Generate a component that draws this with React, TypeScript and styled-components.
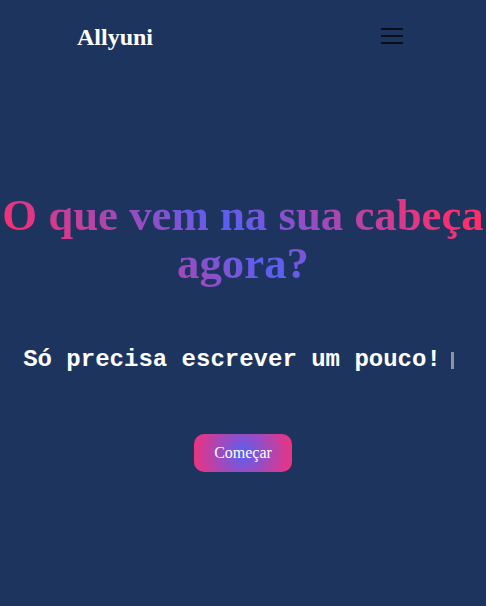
import React from "react";
import styled, { createGlobalStyle } from "styled-components";

const Global = createGlobalStyle`
  html, body { margin: 0; padding: 0; }
  body {
    background: #1d355e;
    font-family: "Liberation Serif", "Times New Roman", serif;
    color: #fff;
  }
`;

const Page = styled.div`
  min-height: 606px;
  display: flex;
  flex-direction: column;
`;

const Nav = styled.nav`
  height: 74px;
  display: flex;
  align-items: center;
  justify-content: space-between;
  padding: 0 83px 0 77px;
`;

const Logo = styled.div`
  font-size: 24px;
  font-weight: 700;
  color: #fff;
`;

const Burger = styled.button`
  width: 22px;
  display: flex;
  flex-direction: column;
  gap: 5px;
  padding: 0;
  margin-bottom: 3px;
  background: none;
  border: none;
`;

const Bar = styled.span`
  display: block;
  height: 2px;
  width: 22px;
  background: #0b0f1a;
`;

const Hero = styled.main`
  display: flex;
  flex-direction: column;
  align-items: center;
  text-align: center;
`;

const Title = styled.h1`
  margin: 117px 0 0;
  width: 100%;
  font-size: 44.8px;
  line-height: 48px;
  font-weight: 700;
  background: linear-gradient(45deg, #ff2d6b 10%, #5a5ff2 50%, #ff2d6b 90%);
  -webkit-background-clip: text;
  background-clip: text;
  color: transparent;
`;

const Sub = styled.p`
  margin: 59px 0 0;
  padding-right: 9px;
  font-family: "Liberation Mono", "Courier New", monospace;
  font-weight: 700;
  font-size: 24px;
  color: #fff;
  display: flex;
  align-items: flex-start;
`;

const Cursor = styled.span`
  display: inline-block;
  width: 3px;
  height: 17px;
  margin-left: 10px;
  margin-top: 6px;
  background: #8a93a8;
`;

const Start = styled.button`
  margin-top: 61px;
  padding: 10px 20px;
  border: none;
  border-radius: 10px;
  font-family: "Liberation Serif", "Times New Roman", serif;
  font-size: 16px;
  color: #fff;
  background: radial-gradient(circle at center, #5a5ff2 0%, #f5307a 100%);
  cursor: pointer;
`;

export default function App() {
  return (
    <Page>
      <Global />
      <Nav>
        <Logo>Allyuni</Logo>
        <Burger aria-label="menu">
          <Bar />
          <Bar />
          <Bar />
        </Burger>
      </Nav>
      <Hero>
        <Title>O que vem na sua cabeça agora?</Title>
        <Sub>
          <span>Só precisa escrever um pouco!</span>
          <Cursor />
        </Sub>
        <Start>Começar</Start>
      </Hero>
    </Page>
  );
}
